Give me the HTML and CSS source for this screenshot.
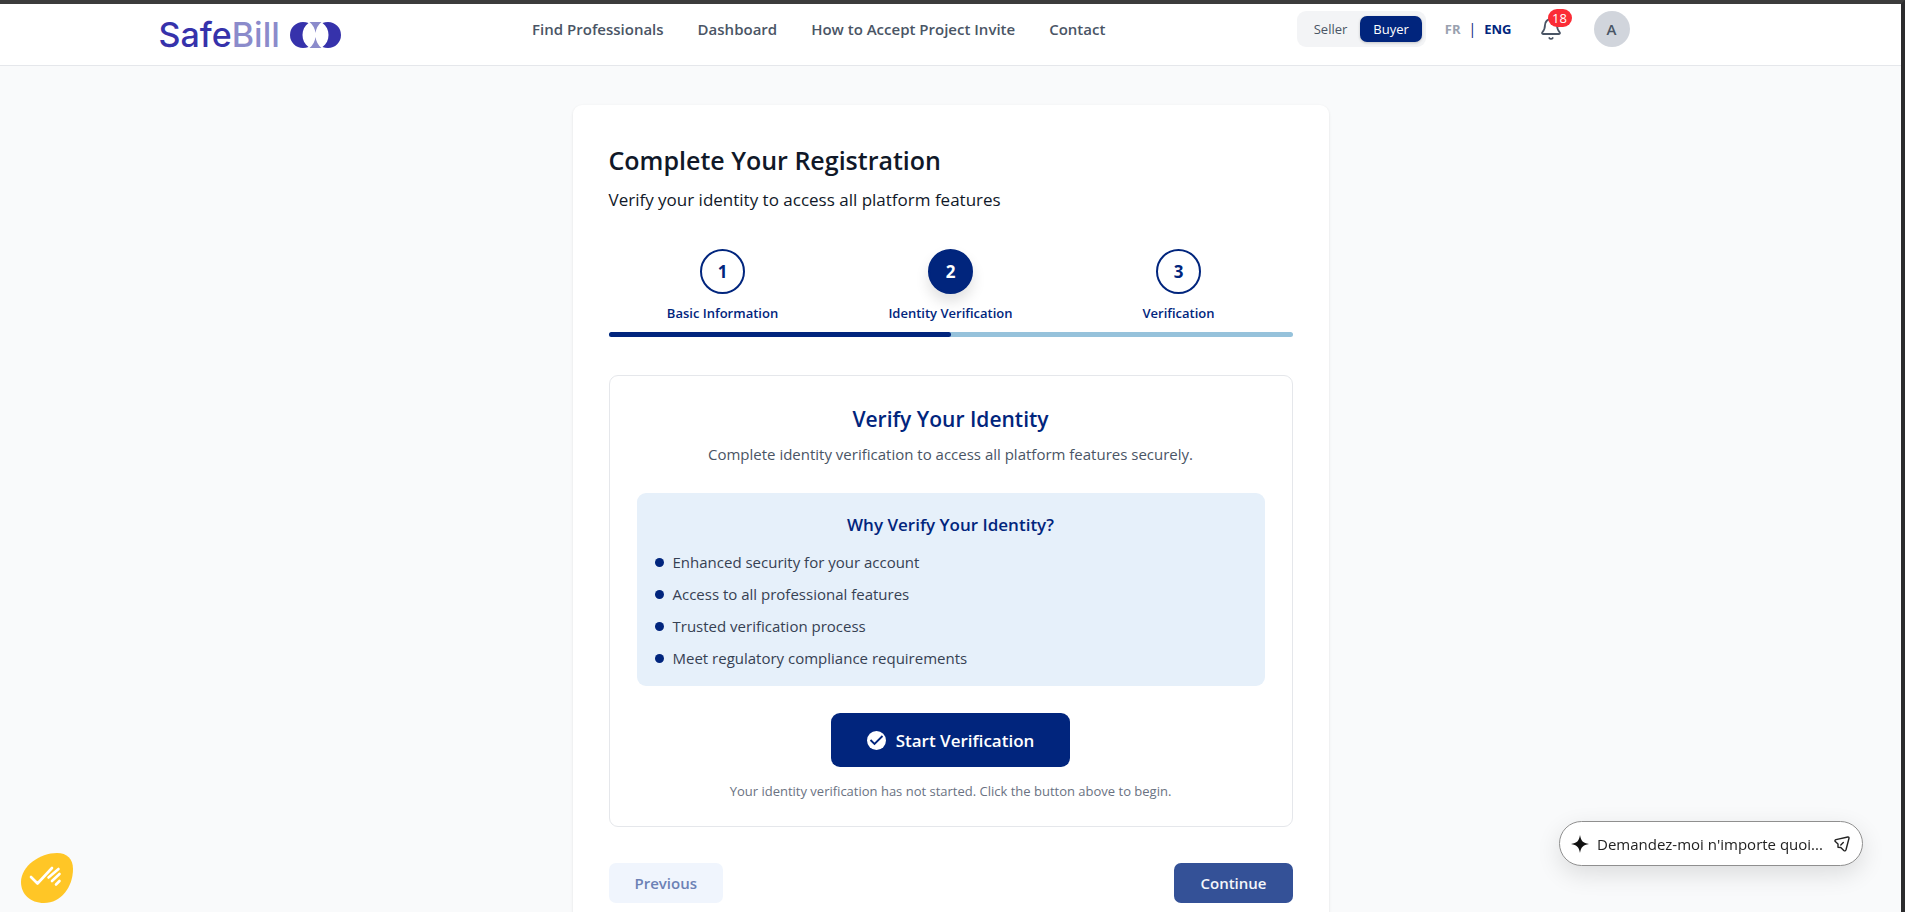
FILE: index.html
```html
<!DOCTYPE html>
<html lang="en">
<head>
    <meta charset="UTF-8">
    <meta name="viewport" content="width=device-width, initial-scale=1.0">
    <title>SafeBill - Complete Your Registration</title>
    <link rel="stylesheet" href="styles.css">
</head>
<body>
    <header class="header">
        <div class="header-inner">
            <a class="logo" href="#" aria-label="SafeBill">
                <span class="logo-text">Safe<span class="logo-light">Bill</span></span>
                <svg class="logo-mark" width="51" height="26" viewBox="0 0 51 26" aria-hidden="true">
                    <path fill="#8b8bcb" d="M19.500 0h12q-5 4-6 11q-1-7-6-11zM19.500 26h12q-5-4-6-11q-1 7-6 11z"/>
                    <path fill="#3632ab" d="M13 0Q16 0 18.500 1C14.500 4 12.500 8 12.500 13s2 9 6 12Q16 26 13 26a13 13 0 0 1 0-26zM38 0Q35 0 32.500 1C36.500 4 38.500 8 38.500 13s-2 9-6 12Q35 26 38 26a13 13 0 0 0 0-26z"/>
                </svg>
            </a>
            <nav class="nav">
                <a href="#">Find Professionals</a>
                <a href="#">Dashboard</a>
                <a href="#">How to Accept Project Invite</a>
                <a href="#">Contact</a>
            </nav>
            <div class="header-right">
                <div class="role-switch">
                    <button type="button">Seller</button>
                    <button type="button" class="active">Buyer</button>
                </div>
                <div class="lang">
                    <button type="button">FR</button>
                    <span>|</span>
                    <button type="button" class="active">ENG</button>
                </div>
                <button type="button" class="bell" aria-label="Notifications">
                    <svg width="24" height="24" viewBox="0 0 24 24" fill="none" stroke="#4a5565" stroke-width="1.800" stroke-linecap="round" stroke-linejoin="round">
                        <path d="M6 8a6 6 0 0 1 12 0c0 4.500 1.400 6 2.700 7.300a1 1 0 0 1-.7 1.700H4a1 1 0 0 1-.7-1.700C4.600 14 6 12.500 6 8"/>
                        <path d="M10.300 21a2 2 0 0 0 3.400 0"/>
                    </svg>
                    <span class="badge">18</span>
                </button>
                <button type="button" class="avatar">A</button>
            </div>
        </div>
    </header>

    <main class="main">
        <section class="card">
            <h1>Complete Your Registration</h1>
            <p class="subtitle">Verify your identity to access all platform features</p>

            <ol class="steps">
                <li><span class="circle">1</span>Basic Information</li>
                <li><span class="circle current">2</span>Identity Verification</li>
                <li><span class="circle">3</span>Verification</li>
            </ol>
            <div class="progress"><div class="progress-fill" style="width: 50%"></div></div>

            <div class="verify">
                <h2>Verify Your Identity</h2>
                <p class="verify-text">Complete identity verification to access all platform features securely.</p>
                <div class="why">
                    <h3>Why Verify Your Identity?</h3>
                    <ul>
                        <li>Enhanced security for your account</li>
                        <li>Access to all professional features</li>
                        <li>Trusted verification process</li>
                        <li>Meet regulatory compliance requirements</li>
                    </ul>
                </div>
                <button type="button" class="start">
                    <svg width="19" height="19" viewBox="0 0 19 19" aria-hidden="true">
                        <circle cx="9.500" cy="9.500" r="9.500" fill="#fff"/>
                        <path d="M3.500 9l4 4 8-8" fill="none" stroke="#01257d" stroke-width="1.800"/>
                    </svg>
                    Start Verification
                </button>
                <p class="note">Your identity verification has not started. Click the button above to begin.</p>
            </div>

            <div class="actions">
                <button type="button" class="previous">Previous</button>
                <button type="button" class="continue">Continue</button>
            </div>
        </section>
    </main>

    <button type="button" class="cookies" aria-label="Cookie preferences">
        <svg width="52" height="50" viewBox="0 0 52 50">
            <path fill="#ffc626" d="M36 0C46 0 52 6 52 16C52 34 40 50 23 50C9 50 0 41 0 29C0 13 19 0 36 0z"/>
            <path d="M10 24l6.500 6.500L31 15M27.500 24.500L37.500 16M31 28l7.500-7M35 31.500l3.500-3.500" fill="none" stroke="#fff" stroke-width="2.600" stroke-linecap="round" stroke-linejoin="round"/>
        </svg>
    </button>

    <form class="chat">
        <svg width="18" height="18" viewBox="0 0 18 18" aria-hidden="true">
            <path fill="#111" d="M9 0C10 6 12 8 18 9C12 10 10 12 9 18C8 12 6 10 0 9C6 8 8 6 9 0z"/>
        </svg>
        <input type="text" placeholder="Demandez-moi n'importe quoi..." aria-label="Demandez-moi n'importe quoi">
        <button type="button" aria-label="Envoyer">
            <svg width="16" height="16" viewBox="0 0 16 16" fill="none" stroke="#222" stroke-width="1.400" stroke-linecap="round" stroke-linejoin="round">
                <path d="M13.800 1L2 3.600Q.3 4.300 1.300 5.600L4 8V11.300L6.800 11.500L9.800 14.500Q11.200 15.500 12 13.800L15 2.300Q15.200.8 13.800 1zM6.800 9L9.300 6.600"/>
            </svg>
        </button>
    </form>
</body>
</html>
```

FILE: styles.css
```css
* {
    box-sizing: border-box;
    margin: 0;
    padding: 0;
}
body {
    font-family: "Open Sans", "Noto Sans", sans-serif;
    height: 100vh;
    display: flex;
    flex-direction: column;
    overflow: hidden;
    color: #101828;
    background: #f9fafb;
    border-top: 4px solid #3c3c3c;
    border-right: 4px solid #2b2b2d;
}
button, input {
    font-family: inherit;
    border: none;
    background: none;
}
button {
    cursor: pointer;
}
a {
    text-decoration: none;
}
ul, ol {
    list-style: none;
}

/* header */
.header {
    flex: none;
    background: #fff;
    border-bottom: 1px solid #e5e7eb;
}
.header-inner {
    max-width: 1584px;
    height: 61px;
    margin: 0 auto;
    padding: 0 113px 11px 0;
    display: flex;
    align-items: center;
    justify-content: space-between;
}
.logo {
    display: flex;
    align-items: center;
    gap: 10px;
    padding-top: 12px;
}
.logo-text {
    font-family: Inter, sans-serif;
    font-size: 34px;
    line-height: 40px;
    font-weight: 500;
    color: #3632ab;
}
.logo-light {
    color: #8b8bcb;
}
.nav {
    display: flex;
    gap: 34px;
}
.nav a {
    font-size: 15px;
    line-height: 24px;
    font-weight: 600;
    color: #4a5565;
}
.header-right {
    display: flex;
    align-items: center;
}
.role-switch {
    display: flex;
    padding: 5px 4px;
    border-radius: 9px;
    background: #f3f4f6;
}
.role-switch button {
    height: 26px;
    padding: 0 13px;
    font-size: 13px;
    color: #4a5565;
    border-radius: 7px;
}
.role-switch .active {
    color: #fff;
    background: #01257d;
    box-shadow: 0 1px 3px rgba(0, 0, 0, 0.2);
}
.lang {
    display: flex;
    gap: 8px;
    margin-left: 19px;
    font-size: 14px;
    line-height: 20px;
    color: #01257d;
}
.lang button {
    font-size: 13px;
    font-weight: 700;
    color: #99a1af;
}
.lang .active {
    color: #01257d;
}
.bell {
    position: relative;
    height: 24px;
    margin-left: 27px;
}
.badge {
    position: absolute;
    top: -8px;
    right: -9px;
    width: 24px;
    height: 18px;
    border-radius: 9px;
    font-size: 13px;
    line-height: 18px;
    color: #fff;
    background: #fb2c36;
}
.avatar {
    width: 36px;
    height: 36px;
    margin-left: 31px;
    border-radius: 50%;
    font-size: 15px;
    font-weight: 600;
    color: #4a5565;
    background: #d1d5dc;
}

/* registration card */
.main {
    flex: 1;
    min-height: 0;
    padding-top: 39px;
}
.card {
    max-width: 756px;
    margin: 0 auto;
    padding: 36px;
    background: #fff;
    border-radius: 9px;
    box-shadow: 0 1px 3px rgba(0, 0, 0, 0.1);
}
h1 {
    font-size: 25px;
    line-height: 38px;
    font-weight: 600;
    margin-bottom: 7px;
}
.subtitle {
    font-size: 17px;
    line-height: 28px;
    margin-bottom: 35px;
}
.steps {
    display: flex;
    justify-content: space-around;
}
.steps li {
    flex: 1;
    display: flex;
    flex-direction: column;
    align-items: center;
    gap: 9px;
    font-size: 13px;
    line-height: 20px;
    font-weight: 600;
    color: #01257d;
}
.circle {
    width: 45px;
    height: 45px;
    border: 2px solid #01257d;
    border-radius: 50%;
    font-size: 17px;
    line-height: 41px;
    font-weight: 700;
    text-align: center;
}
.circle.current {
    color: #fff;
    background: #01257d;
    box-shadow: 0 8px 14px rgba(0, 0, 0, 0.12);
}
.progress {
    height: 5px;
    margin: 9px 0 38px;
    border-radius: 3px;
    background: #96c2db;
}
.progress-fill {
    height: 100%;
    border-radius: 3px;
    background: #01257d;
}
.verify {
    padding: 27px 27px 25px;
    border: 1px solid #e5e7eb;
    border-radius: 9px;
    text-align: center;
}
h2 {
    font-size: 21px;
    line-height: 32px;
    font-weight: 600;
    color: #01257d;
    margin-bottom: 7px;
}
.verify-text {
    font-size: 15px;
    line-height: 24px;
    color: #4a5565;
    margin-bottom: 27px;
}
.why {
    padding: 18px 18px 16px;
    border-radius: 9px;
    background: #e6f0fa;
    margin-bottom: 27px;
}
h3 {
    font-size: 17px;
    line-height: 28px;
    font-weight: 600;
    color: #01257d;
    margin-bottom: 11px;
}
.why ul {
    display: grid;
    gap: 8px;
}
.why li {
    display: flex;
    align-items: center;
    gap: 9px;
    font-size: 15px;
    line-height: 24px;
    color: #364153;
}
.why li::before {
    content: "";
    width: 9px;
    height: 9px;
    border-radius: 50%;
    background: #01257d;
}
.start {
    display: flex;
    align-items: center;
    gap: 10px;
    height: 54px;
    margin: 0 auto 14px;
    padding: 0 36px;
    border-radius: 9px;
    font-size: 17px;
    font-weight: 600;
    color: #fff;
    background: #01257d;
}
.note {
    font-size: 13px;
    line-height: 20px;
    color: #6a7282;
}
.actions {
    display: flex;
    justify-content: space-between;
    margin-top: 36px;
}
.actions button {
    height: 40px;
    padding: 0 26px;
    border-radius: 7px;
    font-size: 15px;
    font-weight: 600;
}
.previous {
    color: #6c81b5;
    background: #f0f5fd;
}
.continue {
    color: #f4f6fa;
    background: #345197;
}

/* floating widgets */
.cookies {
    position: fixed;
    left: 21px;
    bottom: 9px;
    height: 50px;
}
.chat {
    position: fixed;
    right: 42px;
    bottom: 46px;
    width: 304px;
    height: 45px;
    padding: 0 12px 0 11px;
    display: flex;
    align-items: center;
    gap: 8px;
    border: 1px solid #8f8f8f;
    border-radius: 23px;
    background: #fff;
    box-shadow: 0 8px 24px rgba(0, 0, 0, 0.12);
}
.chat input {
    flex: 1;
    min-width: 0;
    font-size: 15px;
    line-height: 24px;
    outline: none;
}
.chat input::placeholder {
    color: #222;
}
.chat button, .chat button svg, .cookies svg, .bell svg {
    display: block;
}
```
